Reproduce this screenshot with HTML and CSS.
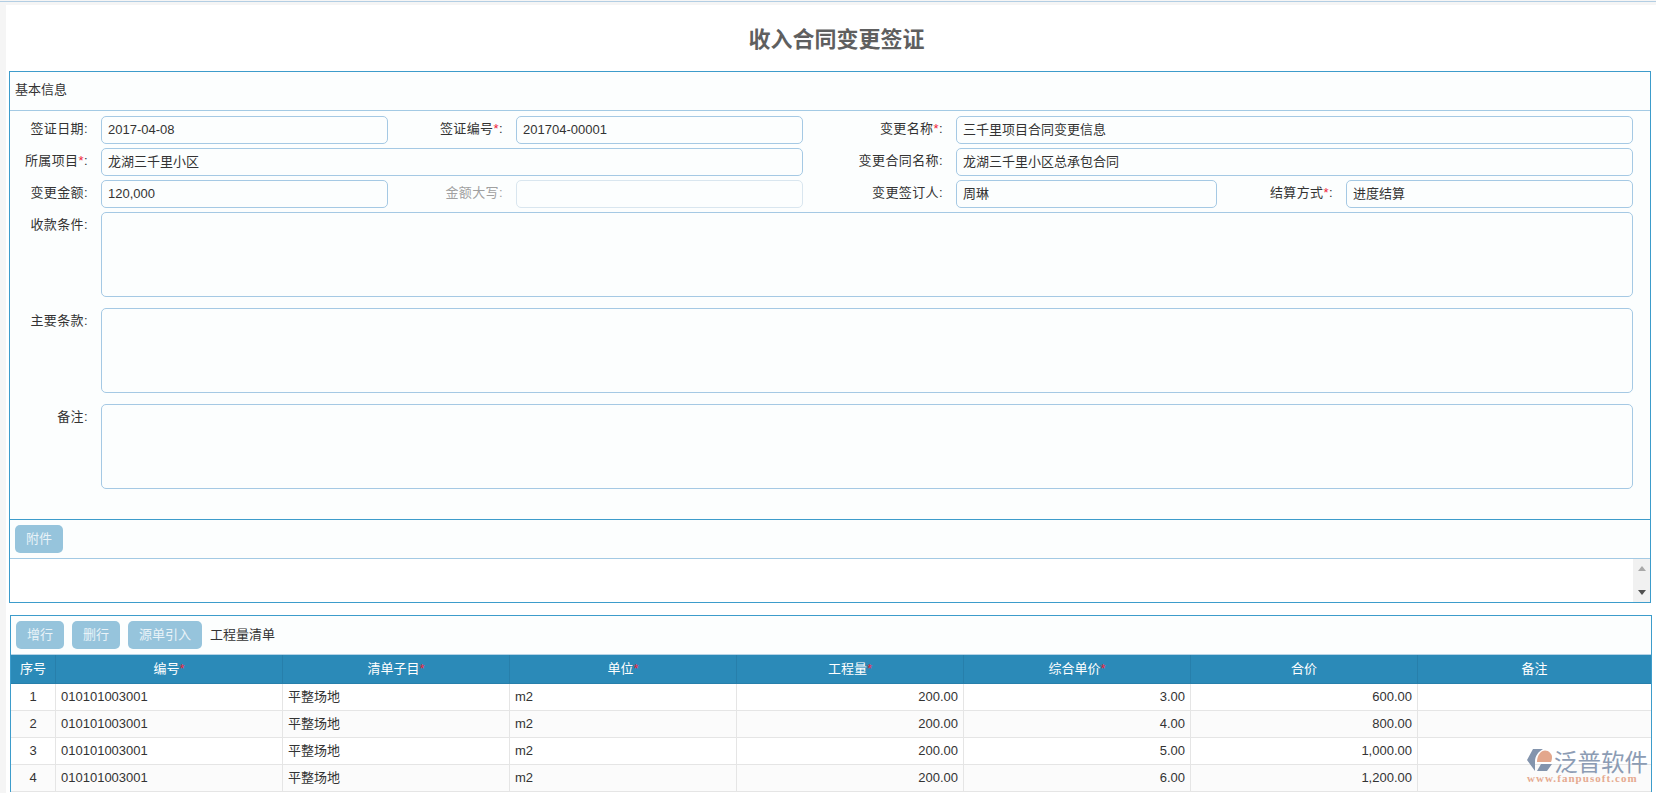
FILE: index.html
```html
<!DOCTYPE html>
<html lang="zh-CN">
<head>
<meta charset="utf-8">
<title>收入合同变更签证</title>
<link rel="stylesheet" href="styles.css">
</head>
<body>
<div class="topline"></div>
<main class="page">
  <h1 class="title">收入合同变更签证</h1>

  <section class="panel panel-info">
    <div class="panel-head">基本信息</div>
    <div class="form">
      <div class="lbl">签证日期:</div>
      <div class="field">2017-04-08</div>
      <div class="lbl">签证编号<span class="req">*</span>:</div>
      <div class="field">201704-00001</div>
      <div class="lbl">变更名称<span class="req">*</span>:</div>
      <div class="field span3">三千里项目合同变更信息</div>

      <div class="lbl">所属项目<span class="req">*</span>:</div>
      <div class="field span3">龙湖三千里小区</div>
      <div class="lbl">变更合同名称:</div>
      <div class="field span3">龙湖三千里小区总承包合同</div>

      <div class="lbl">变更金额:</div>
      <div class="field">120,000</div>
      <div class="lbl muted">金额大写:</div>
      <div class="field disabled"></div>
      <div class="lbl">变更签订人:</div>
      <div class="field">周琳</div>
      <div class="lbl">结算方式<span class="req">*</span>:</div>
      <div class="field">进度结算</div>

      <div class="lbl">收款条件:</div>
      <div class="area"></div>
      <div class="lbl">主要条款:</div>
      <div class="area"></div>
      <div class="lbl">备注:</div>
      <div class="area"></div>
    </div>

    <div class="attach-bar"><button class="btn">附件</button></div>
    <div class="attach-list">
      <div class="scrollbar">
        <svg class="arrow" viewBox="0 0 8 5"><path d="M4 0 8 5H0Z" fill="#a9a9a9"/></svg>
        <svg class="arrow" viewBox="0 0 8 5"><path d="M0 0H8L4 5Z" fill="#505050"/></svg>
      </div>
    </div>
  </section>

  <section class="panel panel-list">
    <div class="toolbar">
      <button class="btn">增行</button>
      <button class="btn">删行</button>
      <button class="btn">源单引入</button>
      <span class="toolbar-title">工程量清单</span>
    </div>
    <table class="grid">
      <colgroup>
        <col class="c-no"><col class="c-w"><col class="c-w"><col class="c-w"><col class="c-w"><col class="c-w"><col class="c-w"><col>
      </colgroup>
      <thead>
        <tr>
          <th>序号</th><th>编号<span class="req">*</span></th><th>清单子目<span class="req">*</span></th><th>单位<span class="req">*</span></th><th>工程量<span class="req">*</span></th><th>综合单价<span class="req">*</span></th><th>合价</th><th>备注</th>
        </tr>
      </thead>
      <tbody>
        <tr><td class="ctr">1</td><td>010101003001</td><td>平整场地</td><td>m2</td><td class="num">200.00</td><td class="num">3.00</td><td class="num">600.00</td><td></td></tr>
        <tr><td class="ctr">2</td><td>010101003001</td><td>平整场地</td><td>m2</td><td class="num">200.00</td><td class="num">4.00</td><td class="num">800.00</td><td></td></tr>
        <tr><td class="ctr">3</td><td>010101003001</td><td>平整场地</td><td>m2</td><td class="num">200.00</td><td class="num">5.00</td><td class="num">1,000.00</td><td></td></tr>
        <tr><td class="ctr">4</td><td>010101003001</td><td>平整场地</td><td>m2</td><td class="num">200.00</td><td class="num">6.00</td><td class="num">1,200.00</td><td></td></tr>
      </tbody>
    </table>
  </section>
</main>

<div class="logo">
  <div class="logo-top">
    <svg class="logo-icon" viewBox="0 0 25 24">
      <path d="M6 0H16C11 3 8 7 8 13V22L0 11Z" fill="#8394ad"/>
      <path d="M10 13C10 6 14 1.5 18 1.5 22 1.5 25 5 25 8 25 10 24.5 12 24 13Z" fill="#e3a78c"/>
      <path d="M10 22 14 15H25L20 22Z" fill="#8394ad"/>
    </svg>
    <span class="logo-name">泛普软件</span>
  </div>
  <div class="logo-url">www.fanpusoft.com</div>
</div>
</body>
</html>
```

FILE: styles.css
```css
html, body {
  height: 100%;
  margin: 0;
  overflow: hidden;
}
body {
  background: #f5f5f5;
  color: #333;
  font: 13px/18px "Liberation Sans", "Noto Sans CJK SC", sans-serif;
  position: relative;
}
.topline {
  height: 1px;
  margin-top: 1px;
  margin-bottom: 3px;
  background: #b3cee3;
}
.page {
  margin-left: 6px;
  padding-left: 3px;
  padding-right: 4px;
  background: #fff;
  height: 788px;
}
.title {
  margin: 0;
  height: 66px;
  line-height: 70px;
  padding-left: 12px;
  text-align: center;
  font-size: 22px;
  font-weight: 700;
  color: #5f5f5f;
}
.panel {
  border: 1px solid #3d9ccb;
  background: #fcfefe;
}
.panel-info {
  margin-right: 1px;
}
.panel-list {
  margin-top: 12px;
  margin-left: 1px;
  border-bottom: 0;
}
.panel-head {
  height: 38px;
  line-height: 36px;
  padding-left: 5px;
  border-bottom: 1px solid #a3cae4;
  color: #333;
}
.form {
  display: grid;
  grid-template-columns: 91px 286.5px 128.5px 287px 153px 261px 129px 1fr;
  grid-template-rows: 28px 28px 28px 92px 92px 85px;
  row-gap: 4px;
  padding: 5px 17px 30px 0;
  border-bottom: 1px solid #3d9ccb;
}
.lbl {
  padding-right: 13px;
  text-align: right;
  line-height: 26px;
  letter-spacing: 0.4px;
  white-space: nowrap;
}
.muted {
  color: #a0a0a0;
}
.req {
  color: #f0243c;
}
.field {
  box-sizing: border-box;
  height: 28px;
  padding: 0 6px;
  border: 1px solid #a5c9e4;
  border-radius: 5px;
  background: #fcfefe;
  line-height: 25px;
}
.span3 {
  grid-column: span 3;
}
.disabled {
  border-color: #d9e6ef;
}
.area {
  box-sizing: border-box;
  grid-column: 2 / -1;
  height: 85px;
  border: 1px solid #a5c9e4;
  border-radius: 5px;
  background: #fcfefe;
}
.attach-bar {
  height: 39px;
  padding: 5px 0 0 5px;
  box-sizing: border-box;
  border-bottom: 1px solid #a3cae4;
}
.attach-list {
  display: flex;
  justify-content: flex-end;
  height: 43px;
  background: #fff;
}
.scrollbar {
  display: flex;
  flex-direction: column;
  justify-content: space-between;
  align-items: center;
  width: 17px;
  padding: 7px 0;
  box-sizing: border-box;
  background: #f1f1f1;
}
.arrow {
  display: block;
  width: 8px;
  height: 5px;
}
.btn {
  height: 28px;
  padding: 0 11px;
  border: 0;
  border-radius: 5px;
  background: #96c4dc;
  color: #e9f3f8;
  font: 13px/28px "Liberation Sans", "Noto Sans CJK SC", sans-serif;
}
.toolbar {
  display: flex;
  align-items: center;
  gap: 8px;
  height: 38px;
  padding-left: 5px;
  border-bottom: 1px solid #b5d3e6;
}
.toolbar-title {
  color: #333;
}
.grid {
  width: 100%;
  border-collapse: separate;
  border-spacing: 0;
  table-layout: fixed;
}
.c-no {
  width: 45px;
}
.c-w {
  width: 227px;
}
.grid th {
  box-sizing: border-box;
  height: 29px;
  padding: 0;
  background: #2b8ab8;
  color: #fff;
  font-weight: 400;
  border-right: 1px solid #277fab;
  border-bottom: 1px solid #277fab;
}
.grid th:last-child,
.grid td:last-child {
  border-right: 0;
}
.grid td {
  box-sizing: border-box;
  height: 27px;
  padding: 0 5px;
  background: #fff;
  border-right: 1px solid #e5e5e5;
  border-bottom: 1px solid #e5e5e5;
}
.grid tbody tr:nth-child(even) td {
  background: #fbfbfb;
}
.grid .ctr {
  text-align: center;
}
.grid .num {
  text-align: right;
}
.logo {
  position: absolute;
  left: 1527px;
  top: 749px;
  width: 124px;
}
.logo-top {
  display: flex;
  align-items: center;
  gap: 2px;
  height: 24px;
}
.logo-icon {
  width: 25px;
  height: 24px;
  flex: none;
}
.logo-name {
  font: 23.5px/24px "Noto Sans CJK SC", sans-serif;
  color: #8c9cb4;
  white-space: nowrap;
}
.logo-url {
  font: 700 11px/11px "Liberation Serif", serif;
  letter-spacing: 1.05px;
  color: #e6aa90;
  white-space: nowrap;
}
```
